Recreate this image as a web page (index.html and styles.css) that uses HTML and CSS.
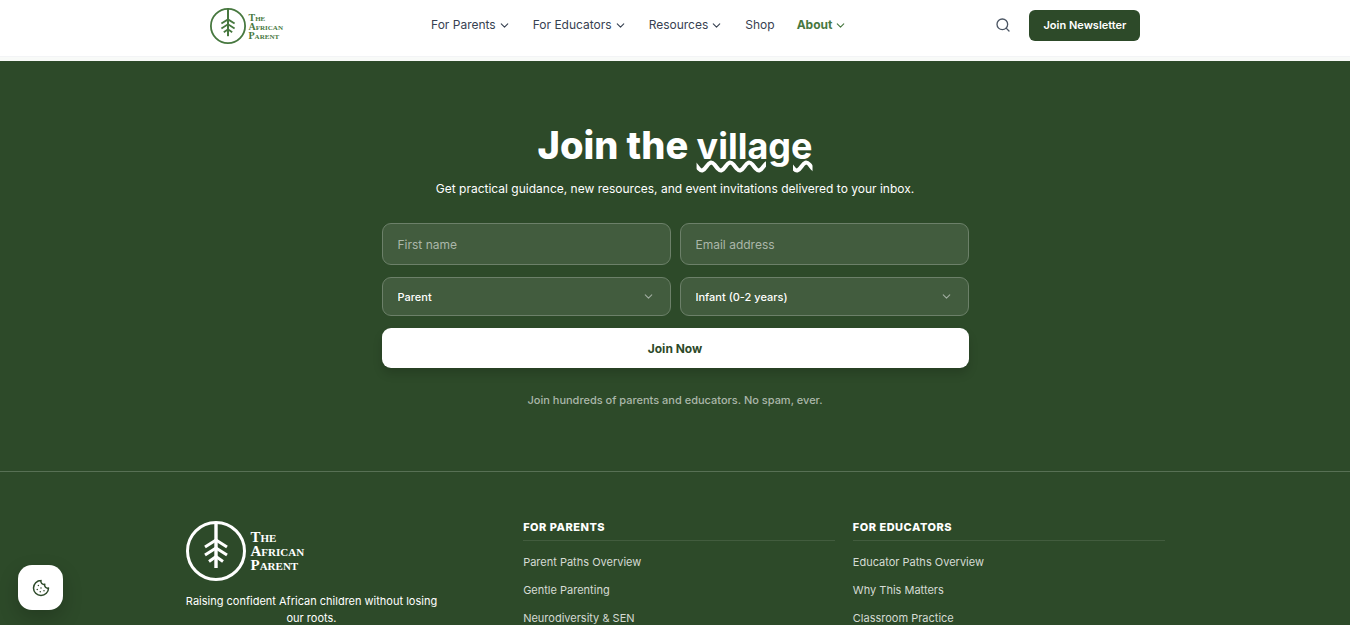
FILE: index.html
```html
<!DOCTYPE html>
<html lang="en">
<head>
  <meta charset="UTF-8">
  <meta name="viewport" content="width=device-width, initial-scale=1.0">
  <title>The African Parent</title>
  <link rel="stylesheet" href="styles.css">
</head>
<body>
  <header class="site-header">
    <div class="header-inner">
      <a href="#" class="logo">
        <svg class="logo-mark" viewBox="0 0 60 60" aria-hidden="true">
          <circle cx="30" cy="30" r="28.5"/>
          <path d="M30 1v46" stroke-width="3.4"/>
          <path d="M19 26l11-7 11 7M19 34l11-7 11 7M23 40.500l7-5 7 5"/>
        </svg>
        <span class="logo-text">The<br>African<br>Parent</span>
      </a>

      <nav class="main-nav">
        <a href="#">For Parents <svg class="chevron" viewBox="0 0 24 24"><path d="m6 9 6 6 6-6"/></svg></a>
        <a href="#">For Educators <svg class="chevron" viewBox="0 0 24 24"><path d="m6 9 6 6 6-6"/></svg></a>
        <a href="#">Resources <svg class="chevron" viewBox="0 0 24 24"><path d="m6 9 6 6 6-6"/></svg></a>
        <a href="#">Shop</a>
        <a href="#" class="active">About <svg class="chevron" viewBox="0 0 24 24"><path d="m6 9 6 6 6-6"/></svg></a>
      </nav>

      <div class="header-actions">
        <button type="button" class="search-btn" aria-label="Search">
          <svg viewBox="0 0 24 24"><circle cx="11" cy="11" r="8"/><path d="m21 21-4.300-4.300"/></svg>
        </button>
        <a href="#newsletter" class="newsletter-btn">Join Newsletter</a>
      </div>
    </div>
  </header>

  <main>
    <section class="newsletter" id="newsletter">
      <h1>Join the <span class="wavy">village</span></h1>
      <p class="lead">Get practical guidance, new resources, and event invitations delivered to your inbox.</p>

      <form class="newsletter-form">
        <input type="text" name="firstName" placeholder="First name" aria-label="First name">
        <input type="email" name="email" placeholder="Email address" aria-label="Email address">
        <div class="select-wrap">
          <select name="role" aria-label="Role">
            <option>Parent</option>
            <option>Educator</option>
          </select>
          <svg class="chevron" viewBox="0 0 24 24"><path d="m6 9 6 6 6-6"/></svg>
        </div>
        <div class="select-wrap">
          <select name="age" aria-label="Age group">
            <option>Infant (0-2 years)</option>
          </select>
          <svg class="chevron" viewBox="0 0 24 24"><path d="m6 9 6 6 6-6"/></svg>
        </div>
        <button type="submit">Join Now</button>
      </form>

      <p class="note">Join hundreds of parents and educators. No spam, ever.</p>
    </section>
  </main>

  <footer class="site-footer">
    <div class="footer-grid">
      <div class="footer-brand">
        <a href="#" class="logo logo-large">
          <svg class="logo-mark" viewBox="0 0 60 60" aria-hidden="true">
            <circle cx="30" cy="30" r="28.5"/>
            <path d="M30 1v46" stroke-width="3.4"/>
            <path d="M19 26l11-7 11 7M19 34l11-7 11 7M23 40.500l7-5 7 5"/>
          </svg>
          <span class="logo-text">The<br>African<br>Parent</span>
        </a>
        <p>Raising confident African children without losing our roots.</p>
      </div>

      <div class="footer-col">
        <h2>For Parents</h2>
        <ul>
          <li><a href="#">Parent Paths Overview</a></li>
          <li><a href="#">Gentle Parenting</a></li>
          <li><a href="#">Neurodiversity &amp; SEN</a></li>
        </ul>
      </div>

      <div class="footer-col">
        <h2>For Educators</h2>
        <ul>
          <li><a href="#">Educator Paths Overview</a></li>
          <li><a href="#">Why This Matters</a></li>
          <li><a href="#">Classroom Practice</a></li>
        </ul>
      </div>
    </div>
  </footer>

  <button type="button" class="cookie-btn" aria-label="Cookie settings">
    <svg viewBox="0 0 24 24">
      <path d="M12 2a10 10 0 1 0 10 10 4 4 0 0 1-5-5 4 4 0 0 1-5-5"/>
      <path d="M8.500 8.500v.01M16 15.500v.01M12 12v.01M11 17v.01M7 14v.01"/>
    </svg>
  </button>
</body>
</html>
```
FILE: styles.css
```css
* {
  box-sizing: border-box;
}

body {
  margin: 0;
  font-family: 'Inter', sans-serif;
  background-color: #2d4a29; /* Forest green */
  color: #fff;
}

a {
  text-decoration: none;
  color: inherit;
}

svg {
  fill: none;
  stroke: currentColor;
  stroke-width: 2;
  stroke-linecap: round;
  stroke-linejoin: round;
}

/* Header */
.site-header {
  position: sticky;
  top: 0;
  z-index: 10;
  background-color: #fff;
  border-bottom: 1px solid #f3f4f6;
  color: #374151;
}

.header-inner {
  display: flex;
  align-items: center;
  justify-content: space-between;
  max-width: 931px;
  margin: 0 auto;
  padding: 8px 0 12px;
}

.logo {
  display: flex;
  align-items: center;
  gap: 3px;
  color: #47783f;
}

.logo-mark {
  width: 36px;
  height: 36px;
  stroke-width: 3;
  stroke-linecap: butt;
  stroke-linejoin: miter;
}

.logo-text {
  font-family: 'Liberation Serif', serif;
  font-weight: bold;
  font-variant: small-caps;
  font-size: 10px;
  line-height: 9px;
}

.logo-large {
  gap: 5px;
  color: #fff;
}

.logo-large .logo-mark {
  width: 60px;
  height: 60px;
}

.logo-large .logo-text {
  font-size: 15px;
  line-height: 14px;
}

.main-nav {
  display: flex;
  gap: 22px;
  padding-bottom: 2px;
  font-size: 12px;
  line-height: 14px;
}

.main-nav a {
  display: flex;
  align-items: center;
  gap: 2px;
}

.main-nav .active {
  color: #47783f;
  font-weight: 700;
}

.chevron {
  width: 13px;
  height: 13px;
}

.header-actions {
  display: flex;
  align-items: center;
  gap: 18px;
  padding-bottom: 2px;
}

.search-btn {
  display: flex;
  padding: 0;
  border: none;
  background: none;
  color: #4b5563;
  cursor: pointer;
}

.search-btn svg {
  width: 16px;
  height: 16px;
}

.newsletter-btn {
  padding: 0 14px;
  border-radius: 6px;
  background-color: #2d4a29;
  color: #fff;
  font-size: 11px;
  font-weight: 600;
  line-height: 31px;
}

/* Newsletter */
.newsletter {
  padding: 60px 20px 62px;
  border-top: 4px solid #f8faf8;
  border-bottom: 1px solid #577054;
  text-align: center;
}

.newsletter h1 {
  margin: 0 0 10px;
  font-size: 38px;
  font-weight: 800;
  line-height: 48px;
}

.wavy {
  font-size: 36px;
  font-weight: 700;
  text-decoration: underline wavy;
  text-decoration-thickness: 4px;
}

.lead {
  margin: 0 0 25px;
  font-size: 12px;
  line-height: 18px;
}

.newsletter-form {
  display: grid;
  grid-template-columns: 1fr 1fr;
  gap: 12px 9px;
  max-width: 587px;
  margin: 0 auto;
}

.newsletter-form input,
.newsletter-form select {
  width: 100%;
  height: 42px;
  padding: 0 15px;
  border: 1px solid #6c8069;
  border-radius: 9px;
  background-color: #425c3e;
  color: #fff;
  font-family: inherit;
  font-size: 12px;
}

.newsletter-form input::placeholder {
  color: #abb7a9;
  opacity: 1;
}

.newsletter-form select {
  display: block;
  height: 39px;
  appearance: none;
  font-size: 11px;
  font-weight: 500;
}

.select-wrap {
  position: relative;
}

.select-wrap .chevron {
  position: absolute;
  top: 13px;
  right: 16px;
  color: #a0ada0;
  pointer-events: none;
}

.newsletter-form button {
  grid-column: span 2;
  height: 40px;
  border: none;
  border-radius: 9px;
  background-color: #fff;
  box-shadow: 0 6px 10px rgba(0, 0, 0, 0.15);
  color: #2d4a29;
  font-family: inherit;
  font-size: 12px;
  font-weight: 700;
  cursor: pointer;
}

.note {
  margin: 24px 0 0;
  color: #abb7a9;
  font-size: 11px;
  font-weight: 500;
  line-height: 17px;
}

/* Footer */
.site-footer {
  padding: 47px 20px 0;
}

.footer-grid {
  display: grid;
  grid-template-columns: 320fr 312fr 312fr;
  gap: 18px;
  max-width: 979px;
  margin: 0 auto;
}

.footer-brand {
  padding-top: 2px;
}

.footer-brand p {
  max-width: 252px;
  margin: 12px 0 0;
  font-size: 11px;
  line-height: 17px;
  text-align: center;
}

.footer-col h2 {
  margin: 0;
  padding-bottom: 4px;
  border-bottom: 1px solid #425c3e;
  font-size: 11px;
  font-weight: 800;
  letter-spacing: 0.5px;
  line-height: 17px;
  text-transform: uppercase;
}

.footer-col ul {
  display: grid;
  gap: 10px;
  margin: 12px 0 0;
  padding: 0;
  list-style: none;
  color: #d5dbd4;
  font-size: 11px;
  line-height: 18px;
}

/* Cookie button */
.cookie-btn {
  position: fixed;
  left: 18px;
  bottom: 15px;
  display: grid;
  place-items: center;
  width: 45px;
  height: 45px;
  padding: 0;
  border: none;
  border-radius: 14px;
  background-color: #fff;
  box-shadow: 0 8px 20px rgba(0, 0, 0, 0.2);
  color: #2d4a29;
  cursor: pointer;
}

.cookie-btn svg {
  width: 18px;
  height: 18px;
}
```
